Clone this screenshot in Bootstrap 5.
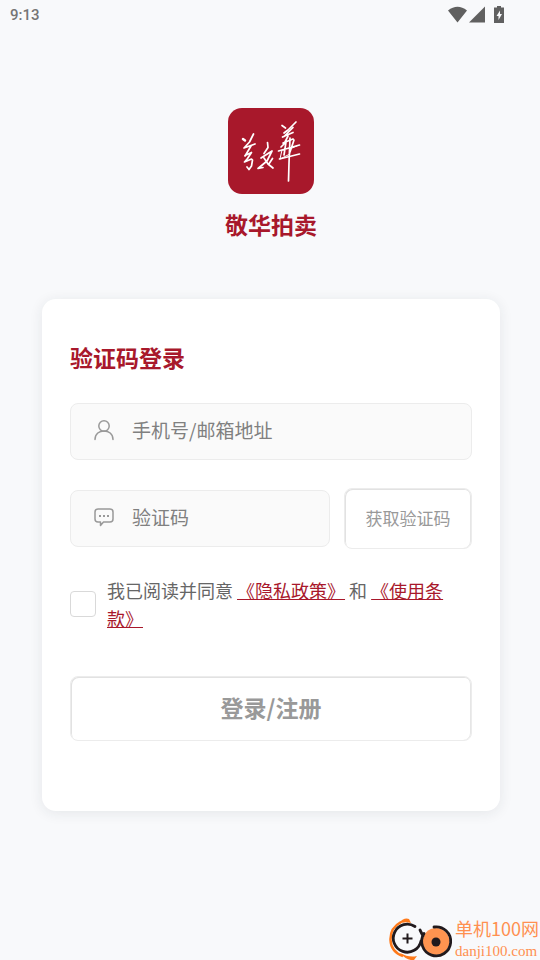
<!DOCTYPE html>
<html lang="zh-CN">
<head>
<meta charset="utf-8">
<meta name="viewport" content="width=device-width, initial-scale=1">
<title>敬华拍卖</title>
<link href="https://cdn.jsdelivr.net/npm/bootstrap@5.3.0/dist/css/bootstrap.min.css" rel="stylesheet">
<style>
:root { --brand: #a8182b; --line: #ececec; }
body { background: #f8f9fb; font-family: "Noto Sans CJK SC", sans-serif; color: #666; }
.status-bar { height: 30px; padding: 0 35px 0 10px; font: 500 15px/30px Roboto, sans-serif; color: #757575; }
.page-main { padding: 78px 40px 0 42px; }
.brand-name { font-size: 23px; line-height: 32px; margin: 14px 0 0; }
.brand-text { color: var(--brand); }
.login-card { margin-top: 59px; padding: 41px 28px 70px; border-radius: 14px; box-shadow: 0 2px 14px rgba(30, 40, 60, .09); }
.login-title { font-size: 23px; line-height: 34px; margin-bottom: 29px; }
.field { height: 57px; background: #fafafa; border: 1px solid var(--line); border-radius: 8px; padding: 0 12px 3px 23px; }
.field:focus-within { border-color: var(--brand); }
.field input { height: 50px; padding: 0 0 1px 2px; font-size: 19px; color: #555; }
.field input::placeholder { color: #808080; }
.code-row { margin-top: 28px; gap: 14px; }
.ghost { background: #fff; color: #999; border: 1px solid var(--line); border-radius: 8px; padding: 0 0 2px; }
.ghost:hover { background: #fff; color: var(--brand); border-color: var(--line); }
.btn-code { flex: 0 0 128px; height: 61px; font-size: 17px; box-shadow: inset 1px 1px 0 #e2e2e2, inset -1px 0 0 #e6e6e6; }
.btn-login { height: 65px; font-size: 23px; margin-top: 44px; box-shadow: inset 1px 1px 0 #e2e2e2, inset -1px 0 0 #e6e6e6; }
.agree { margin-top: 27px; gap: 11px; font-size: 18px; line-height: 28px; }
.agree a { display: inline; text-decoration-color: var(--brand); }
.agree .form-check-input { width: 26px; height: 26px; border: 1px solid #d9d9d9; border-radius: 4px; }
.agree .form-check-input:checked { background-color: var(--brand); }
.site-badge { right: 1px; bottom: 0; color: #ff9050; }
.site-cn { font-size: 18px; line-height: 20px; }
.site-url { font: 15px/18px "Liberation Serif", serif; }
</style>
<script src="https://cdn.jsdelivr.net/npm/bootstrap@5.3.0/dist/js/bootstrap.bundle.min.js"></script>
</head>
<body class="min-vh-100 position-relative">
<header class="status-bar d-flex justify-content-between align-items-center">
  <time>9:13</time>
  <svg width="57" height="20" viewBox="448 5 57 20" fill="#606060" aria-hidden="true">
    <path d="M448 10.5Q457.500 3 467 10.500L457.500 22.500ZM469 22.500 485 6.500V22.500Z"/>
    <path fill-rule="evenodd" d="M497 6h4v1.500h3v15.500h-10V7.500h3ZM500 10.500 496.500 16h2v4l3.500-6h-2Z"/>
  </svg>
</header>
<main class="page-main">
  <section class="d-flex flex-column align-items-center">
    <svg width="86" height="86" viewBox="0 0 86 86" role="img" aria-label="敬华">
      <rect width="86" height="86" rx="14" fill="#a8182b"/>
      <g fill="none" stroke="#fff" stroke-width="1.700" stroke-linecap="round" stroke-linejoin="round">
        <path d="M15 31l2 1.500" stroke-width="2.500"/>
        <path d="M25.500 26l-4 8-5.500 6 11-4M23 38l-6 10M17 47.500l6.500-3-4 6-3 3.500 7-3 1 1-1 6-2.500 3.500-2-2.500"/>
        <path d="M39.500 34.500l.5 5-4 6M33 50l11-7-5 10-9 7.500 5-1M36 50l4 6 5 4M44.500 50.500l-4 6"/>
        <path d="M54 17.500l3.500 2.500M68 14l-8 8-4 3M65 19.500l-9 9M54.500 29l10.500-4.500M60 28l-4 8-3 3M55 35l10-4M50.500 43l21-6M58 34l-2 13M66 32l-4 12M51.500 51l20-5"/>
        <path d="M62 30l-1 25-.5 18"/>
        <path d="M54 42l-2 9 10-5M64 40l5-2" stroke-width="1"/>
      </g>
    </svg>
    <h1 class="brand-name brand-text fw-bold">敬华拍卖</h1>
  </section>
  <form class="login-card bg-white" onsubmit="return false">
    <h2 class="login-title brand-text fw-bold">验证码登录</h2>
    <div class="field d-flex align-items-center">
      <label for="account" class="d-flex" aria-label="手机号/邮箱地址">
        <svg width="20" height="22" viewBox="0 0 20 22" fill="none" stroke="#999" stroke-width="1.500" stroke-linecap="round"><circle cx="10" cy="7" r="5.200"/><path d="M1 20.500C1 9 19 9 19 20.500"/></svg>
      </label>
      <input id="account" type="text" class="form-control border-0 bg-transparent shadow-none ms-3" placeholder="手机号/邮箱地址">
    </div>
    <div class="code-row d-flex align-items-center">
      <div class="field d-flex align-items-center flex-fill">
        <label for="code" class="d-flex" aria-label="验证码">
          <svg width="20" height="22" viewBox="0 0 20 22" fill="none" stroke="#999" stroke-width="1.500" stroke-linejoin="round"><path d="M4 3h12a3 3 0 0 1 3 3v7a3 3 0 0 1-3 3H9.500L6.500 19.500v-3.500H4a3 3 0 0 1-3-3V6a3 3 0 0 1 3-3Z"/><path d="M5 10h2M9 10h2M13 10h2" stroke-width="2"/></svg>
        </label>
        <input id="code" type="text" class="form-control border-0 bg-transparent shadow-none ms-3" placeholder="验证码">
      </div>
      <button type="button" class="btn ghost btn-code">获取验证码</button>
    </div>
    <div class="agree d-flex align-items-center">
      <input id="agree" type="checkbox" class="form-check-input flex-shrink-0 m-0">
      <label for="agree" class="flex-fill">我已阅读并同意 <a href="#privacy" class="brand-text">《隐私政策》</a> 和 <a href="#terms" class="brand-text">《使用条<wbr>款》</a></label>
    </div>
    <button type="submit" class="btn ghost btn-login w-100 fw-bold">登录/注册</button>
  </form>
</main>
<aside class="site-badge position-absolute d-flex align-items-center">
  <svg width="66" height="42" viewBox="391 918 66 42" fill="none" aria-hidden="true">
    <path d="M403 922Q392 928 392.500 940T405 956" stroke="#ff7a1a" stroke-width="2.500"/>
    <path d="M400 924q6-7 11-5l2 4q-6-2-13 1ZM402 953q9 5 17 3l-3 4q-7 1-14-7Z" fill="#ff7a1a"/>
    <circle cx="438" cy="941.500" r="13.500" fill="#ff9450"/>
    <path d="M417 926.500A14 14 0 1 0 423 941M422 930l3 6M436 927A14.500 14.500 0 1 1 426 933.500" stroke="#211a1d" stroke-width="2.800" stroke-linecap="round"/>
    <circle cx="438" cy="942" r="4.500" fill="#211a1d"/>
    <path d="M404.500 938.500h10M409.500 933.500v10" stroke="#211a1d" stroke-width="2"/>
  </svg>
  <div><div class="site-cn mb-1">单机100网</div><div class="site-url">danji100.com</div></div>
</aside>
</body>
</html>
